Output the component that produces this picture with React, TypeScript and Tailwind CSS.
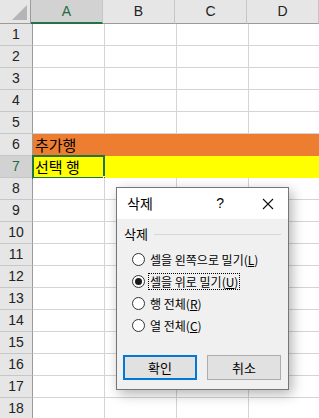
import React from 'react';

const COLS = ['A', 'B', 'C', 'D'];
const ROWS = Array.from({ length: 18 }, (_, i) => i + 1);

const FONT = "font-['Segoe_UI','Liberation_Sans','Noto_Sans_CJK_KR',sans-serif]";
const KR = "font-['Noto_Sans_CJK_KR','Noto_Sans',sans-serif]";

const Radio = ({ checked, label, hot, focus }: { checked?: boolean; label: string; hot: string; focus?: boolean }) => (
  <div className="flex items-center h-[22px] pl-[15px]">
    <span className="w-[13px] h-[13px] rounded-full border border-[#333] bg-white flex items-center justify-center">
      {checked && <span className="w-[7px] h-[7px] rounded-full bg-[#1a1a1a]" />}
    </span>
    <span className={`ml-[4px] text-[12px] leading-[15px] text-black px-[1px] whitespace-nowrap ${focus ? 'outline-1 outline-dotted outline-black' : 'outline-none'}`}>
      {label}(<span className="underline">{hot}</span>)
    </span>
  </div>
);

const Dialog = () => (
  <div className={`absolute left-[116px] top-[187px] w-[173px] h-[203px] border border-[#767676] bg-[#f0f0f0] shadow-[3px_4px_12px_rgba(0,0,0,0.3)] flex flex-col ${KR}`}>
    <div className="h-[31px] bg-white flex items-center pl-[10px] pr-[14px]">
      <span className="text-[14px] text-black">삭제</span>
      <span className="ml-auto mr-[38px] text-[14px] text-black font-['Liberation_Sans',sans-serif]">?</span>
      <svg width="12" height="12" viewBox="0 0 12 12">
        <path d="M1 1 L11 11 M11 1 L1 11" stroke="#111" strokeWidth="1.1" />
      </svg>
    </div>
    <div className="flex items-center px-[7px] mt-[6px] h-[18px]">
      <span className="text-[13px] text-black">삭제</span>
      <span className="flex-1 h-px bg-[#d6d6d6] ml-[6px]" />
    </div>
    <div className="flex flex-col mt-[5px]">
      <Radio label="셀을 왼쪽으로 밀기" hot="L" />
      <Radio checked focus label="셀을 위로 밀기" hot="U" />
      <Radio label="행 전체" hot="R" />
      <Radio label="열 전체" hot="C" />
    </div>
    <div className="flex gap-[10px] px-[6px] mt-[19px]">
      <button className="w-[74px] h-[25px] border-2 border-[#0078d7] bg-[#e1e1e1] text-[13px] text-black">확인</button>
      <button className="w-[74px] h-[25px] border border-[#adadad] bg-[#e1e1e1] text-[13px] text-black">취소</button>
    </div>
  </div>
);

export default function App() {
  return (
    <div className={`relative w-[319px] h-[418px] overflow-hidden bg-white ${FONT}`}>
      <div className="flex h-[24px]">
        <div className="w-[33px] h-[24px] bg-[#e6e6e6] border-r border-b border-[#9b9b9b] relative">
          <svg className="absolute right-[3px] bottom-[3px]" width="15" height="15" viewBox="0 0 15 15">
            <path d="M15 0 L15 15 L0 15 Z" fill="#b5b5b5" />
          </svg>
        </div>
        {COLS.map((c) => (
          <div
            key={c}
            className={`w-[72px] shrink-0 h-[24px] flex items-center justify-center text-[14px] border-r border-[#c6c6c6] ${c === 'A' ? 'bg-[#d2d2d2] border-b-2 border-b-[#217346] text-[#1e6b41]' : 'bg-[#e6e6e6] border-b border-b-[#9b9b9b] text-[#222]'}`}
          >
            {c}
          </div>
        ))}
      </div>
      {ROWS.map((r) => {
        const rowBg = r === 6 ? 'bg-[#ed7d31]' : r === 7 ? 'bg-[#ffff00]' : 'bg-white';
        return (
          <div key={r} className="flex h-[22px]">
            <div
              className={`w-[33px] shrink-0 h-[22px] flex items-center justify-center text-[14px] border-b border-r border-[#9b9b9b] border-b-[#c6c6c6] ${r === 7 ? 'bg-[#d2d2d2] text-[#1e6b41]' : 'bg-[#e6e6e6] text-[#222]'}`}
            >
              {r}
            </div>
            {COLS.map((c) => (
              <div
                key={c}
                className={`relative w-[72px] shrink-0 h-[22px] ${rowBg} ${r === 6 || r === 7 ? '' : 'border-r border-b border-[#d4d4d4]'}`}
              >
                {r === 6 && c === 'A' && (
                  <span className={`absolute left-[2px] top-0 text-[15px] leading-[22px] whitespace-nowrap text-black ${KR}`}>추가행</span>
                )}
                {r === 7 && c === 'A' && (
                  <>
                    <span className={`absolute left-[2px] top-0 text-[15px] leading-[22px] whitespace-nowrap text-black ${KR}`}>선택 행</span>
                    <div className="absolute -left-[1px] -top-[1px] w-[73px] h-[24px] border-2 border-[#217346]" />
                    <div className="absolute -right-[4px] -bottom-[4px] w-[6px] h-[6px] bg-[#217346] border border-white" />
                  </>
                )}
              </div>
            ))}
          </div>
        );
      })}
      <Dialog />
    </div>
  );
}
